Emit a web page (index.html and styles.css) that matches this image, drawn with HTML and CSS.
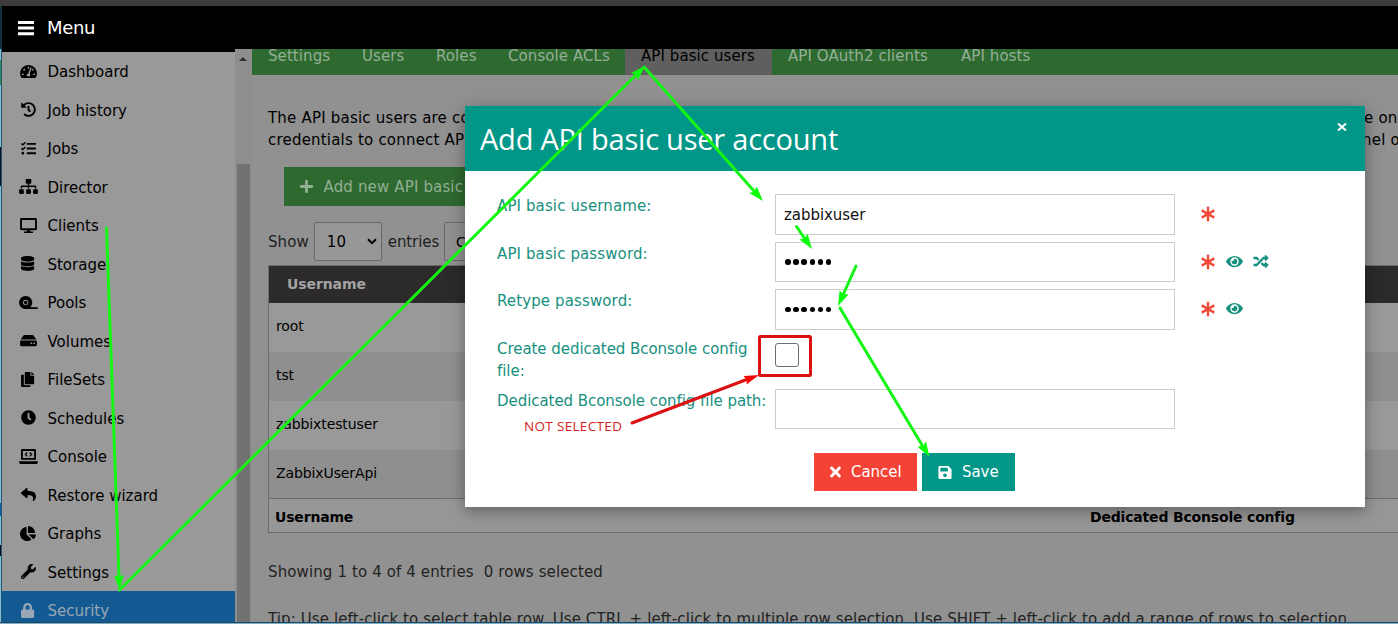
FILE: index.html
```
<!DOCTYPE html>
<html lang="en">
<head>
<meta charset="utf-8">
<title>API basic users</title>
<link rel="stylesheet" href="styles.css">
</head>
<body>
<div class="app">
  <div class="topstrip"></div>
  <header class="menubar">
    <svg class="bars" viewBox="0 0 16 16"><path d="M0 1h16v3H0zM0 6.6h16v3H0zM0 12.200h16v3H0z"/></svg>
    <span class="menu-label">Menu</span>
  </header>
  <div class="main">
    <div class="edge"></div>
    <nav class="sidebar">
      <a class="item"><svg class="ico w576" viewBox="0 0 576 512"><path d="M288 32C128.94 32 0 160.94 0 320c0 52.8 14.25 102.26 39.06 144.8 5.61 9.62 16.3 15.2 27.44 15.2h443c11.14 0 21.83-5.58 27.44-15.2C561.75 422.26 576 372.8 576 320c0-159.06-128.94-288-288-288zm0 64c14.71 0 26.58 10.13 30.32 23.65-1.11 2.26-2.64 4.23-3.45 6.67l-9.22 27.67c-5.13 3.49-10.97 6.01-17.64 6.01-17.67 0-32-14.33-32-32S270.33 96 288 96zM96 384c-17.67 0-32-14.33-32-32s14.33-32 32-32 32 14.33 32 32-14.33 32-32 32zm48-160c-17.67 0-32-14.33-32-32s14.33-32 32-32 32 14.33 32 32-14.33 32-32 32zm246.77-72.41l-61.33 184C343.13 347.33 352 364.54 352 384c0 11.72-3.38 22.55-8.88 32H232.88c-5.5-9.45-8.88-20.28-8.88-32 0-33.94 26.5-61.43 59.9-63.59l61.34-184.01c4.17-12.56 17.73-19.45 30.36-15.17 12.57 4.19 19.35 17.79 15.17 30.36zm14.66 57.2l15.52-46.55c3.47-1.29 7.13-2.23 11.05-2.23 17.67 0 32 14.33 32 32s-14.33 32-32 32c-11.38-.01-20.89-6.28-26.57-15.22zM480 384c-17.67 0-32-14.33-32-32s14.33-32 32-32 32 14.33 32 32-14.33 32-32 32z"/></svg><span>Dashboard</span></a>
      <a class="item"><svg class="ico" viewBox="0 0 512 512"><path d="M504 255.531c.253 136.64-111.18 248.372-247.82 248.468-59.015.042-113.223-20.53-155.822-54.911-11.077-8.94-11.905-25.541-1.839-35.607l11.267-11.267c8.609-8.609 22.353-9.551 31.891-1.984C173.062 425.135 212.781 440 256 440c101.705 0 184-82.311 184-184 0-101.705-82.311-184-184-184-48.814 0-93.149 18.969-126.068 49.932l50.754 50.754c10.08 10.08 2.941 27.314-11.313 27.314H24c-8.837 0-16-7.163-16-16V38.627c0-14.254 17.234-21.393 27.314-11.314l49.372 49.372C129.209 34.136 189.552 8 256 8c136.81 0 247.747 110.78 248 247.531zm-180.912 78.784l9.823-12.63c8.138-10.463 6.253-25.542-4.21-33.679L288 256.349V152c0-13.255-10.745-24-24-24h-16c-13.255 0-24 10.745-24 24v135.651l65.409 50.874c10.463 8.137 25.541 6.253 33.679-4.210z"/></svg><span>Job history</span></a>
      <a class="item"><svg class="ico" viewBox="0 0 512 512"><path d="M139.61 35.5a12 12 0 0 0-17 0L58.93 98.81l-22.7-22.12a12 12 0 0 0-17 0L3.53 92.41a12 12 0 0 0 0 17l47.59 47.4a12.78 12.78 0 0 0 17.61 0l15.59-15.62L156.52 69a12.09 12.09 0 0 0 .09-17zm0 159.19a12 12 0 0 0-17 0l-63.68 63.72-22.7-22.1a12 12 0 0 0-17 0L3.53 252a12 12 0 0 0 0 17L51 316.5a12.77 12.77 0 0 0 17.6 0l15.7-15.69 72.2-72.22a12 12 0 0 0 .09-16.9zM64 368c-26.49 0-48.59 21.5-48.59 48S37.53 464 64 464a48 48 0 0 0 0-96zm432 16H208a16 16 0 0 0-16 16v32a16 16 0 0 0 16 16h288a16 16 0 0 0 16-16v-32a16 16 0 0 0-16-16zm0-320H208a16 16 0 0 0-16 16v32a16 16 0 0 0 16 16h288a16 16 0 0 0 16-16V80a16 16 0 0 0-16-16zm0 160H208a16 16 0 0 0-16 16v32a16 16 0 0 0 16 16h288a16 16 0 0 0 16-16v-32a16 16 0 0 0-16-16z"/></svg><span>Jobs</span></a>
      <a class="item"><svg class="ico w640" viewBox="0 0 640 512"><path d="M128 352H32c-17.67 0-32 14.33-32 32v96c0 17.67 14.33 32 32 32h96c17.67 0 32-14.33 32-32v-96c0-17.67-14.33-32-32-32zm-24-80h192v48h48v-48h192v48h48v-57.59c0-21.17-17.23-38.41-38.41-38.41H344v-64h40c17.67 0 32-14.33 32-32V32c0-17.67-14.33-32-32-32H256c-17.67 0-32 14.33-32 32v96c0 17.67 14.33 32 32 32h40v64H94.41C73.23 224 56 241.23 56 262.41V320h48v-48zm264 80h-96c-17.67 0-32 14.33-32 32v96c0 17.67 14.33 32 32 32h96c17.67 0 32-14.33 32-32v-96c0-17.67-14.33-32-32-32zm240 0h-96c-17.67 0-32 14.33-32 32v96c0 17.67 14.33 32 32 32h96c17.67 0 32-14.33 32-32v-96c0-17.67-14.33-32-32-32z"/></svg><span>Director</span></a>
      <a class="item"><svg class="ico w576" viewBox="0 0 576 512"><path d="M528 0H48C21.5 0 0 21.5 0 48v320c0 26.5 21.5 48 48 48h192l-16 48h-72c-13.3 0-24 10.7-24 24s10.7 24 24 24h272c13.3 0 24-10.7 24-24s-10.7-24-24-24h-72l-16-48h192c26.5 0 48-21.5 48-48V48c0-26.5-21.5-48-48-48zm-16 352H64V64h448v288z"/></svg><span>Clients</span></a>
      <a class="item"><svg class="ico w448" viewBox="0 0 448 512"><path d="M448 73.143v45.714C448 159.143 347.667 192 224 192S0 159.143 0 118.857V73.143C0 32.857 100.333 0 224 0s224 32.857 224 73.143zM448 176v102.857C448 319.143 347.667 352 224 352S0 319.143 0 278.857V176c48.125 33.143 136.208 48.572 224 48.572S399.874 209.143 448 176zm0 160v102.857C448 479.143 347.667 512 224 512S0 479.143 0 438.857V336c48.125 33.143 136.208 48.572 224 48.572S399.874 369.143 448 336z"/></svg><span>Storage</span></a>
      <a class="item"><svg class="ico w640" viewBox="0 0 640 512"><path d="M224 192c-35.3 0-64 28.7-64 64s28.7 64 64 64 64-28.7 64-64-28.7-64-64-64zm400 224H380.6c41.5-40.7 67.4-97.3 67.4-160 0-123.700-100.300-224-224-224S0 132.3 0 256s100.3 224 224 224h400c8.8 0 16-7.2 16-16v-32c0-8.8-7.2-16-16-16zm-400-64c-53 0-96-43-96-96s43-96 96-96 96 43 96 96-43 96-96 96z"/></svg><span>Pools</span></a>
      <a class="item"><svg class="ico w576" viewBox="0 0 576 512"><path d="M576 304v96c0 26.51-21.49 48-48 48H48c-26.51 0-48-21.49-48-48v-96c0-26.51 21.49-48 48-48h480c26.51 0 48 21.49 48 48zm-48-80a79.557 79.557 0 0 1 30.777 6.165L462.25 85.374A48.003 48.003 0 0 0 422.311 64H153.689a48 48 0 0 0-39.938 21.374L17.223 230.165A79.557 79.557 0 0 1 48 224h480zm-48 96c-17.673 0-32 14.327-32 32s14.327 32 32 32 32-14.327 32-32-14.327-32-32-32zm-96 0c-17.673 0-32 14.327-32 32s14.327 32 32 32 32-14.327 32-32-14.327-32-32-32z"/></svg><span>Volumes</span></a>
      <a class="item"><svg class="ico w448" viewBox="0 0 448 512"><path d="M320 448v40c0 13.255-10.745 24-24 24H24c-13.255 0-24-10.745-24-24V120c0-13.255 10.745-24 24-24h72v296c0 30.879 25.121 56 56 56h168zm0-344V0H152c-13.255 0-24 10.745-24 24v368c0 13.255 10.745 24 24 24h272c13.255 0 24-10.745 24-24V128H344c-13.2 0-24-10.8-24-24zm120.971-31.029L375.029 7.029A24 24 0 0 0 358.059 0H352v96h96v-6.059a24 24 0 0 0-7.029-16.970z"/></svg><span>FileSets</span></a>
      <a class="item"><svg class="ico" viewBox="0 0 512 512"><path d="M256,8C119,8,8,119,8,256S119,504,256,504,504,393,504,256,393,8,256,8Zm92.490,313h0l-20,25a16,16,0,0,1-22.490,2.500h0l-67-49.720a40,40,0,0,1-15-31.230V112a16,16,0,0,1,16-16h32a16,16,0,0,1,16,16V256l58,42.500A16,16,0,0,1,348.490,321Z"/></svg><span>Schedules</span></a>
      <a class="item"><svg class="ico w640" viewBox="0 0 640 512"><path fill-rule="evenodd" d="M112 0h416c26 0 48 22 48 48v320H64V48C64 22 86 0 112 0zm16 64v240h384V64zM0 416h640v16c0 44-30 80-64 80H64c-36 0-64-36-64-80z"/><path class="line" d="M278 118l-66 68 66 68M362 118l66 68-66 68"/></svg><span>Console</span></a>
      <a class="item"><svg class="ico" viewBox="0 0 512 512"><path d="M8.309 189.836L184.313 37.851C199.719 24.546 224 35.347 224 56.015v80.053c160.629 1.839 288 34.032 288 186.258 0 61.441-39.581 122.309-83.333 154.132-13.653 9.931-33.111-2.533-28.077-18.631 45.344-145.012-21.507-183.510-176.590-185.742V360c0 20.700-24.300 31.453-39.687 18.164l-176.004-152c-11.071-9.562-11.086-26.753 0-36.328z"/></svg><span>Restore wizard</span></a>
      <a class="item"><svg class="ico w544" viewBox="0 0 544 512"><path d="M527.79 288H290.5l158.03 158.03c6.04 6.04 15.98 6.53 22.19.68 38.7-36.46 65.32-85.61 73.13-140.86 1.34-9.46-6.51-17.85-16.06-17.850zm-15.83-64.8C503.72 103.74 408.26 8.28 288.8.04 279.68-.59 272 7.1 272 16.24V240h223.77c9.14 0 16.82-7.68 16.19-16.8zM224 288V50.71c0-9.55-8.39-17.4-17.84-16.06C86.99 51.49-4.1 155.6.14 280.37 4.5 408.51 114.83 513.59 243.03 511.98c50.4-.63 96.97-16.87 135.26-44.03 7.9-5.6 8.42-17.23 1.57-24.08L224 288z"/></svg><span>Graphs</span></a>
      <a class="item"><svg class="ico" viewBox="0 0 512 512"><path d="M507.73 109.1c-2.24-9.03-13.54-12.09-20.12-5.51l-74.36 74.36-67.88-11.31-11.31-67.88 74.36-74.36c6.62-6.62 3.43-17.9-5.66-20.16-47.38-11.74-99.55.91-136.58 37.93-39.64 39.64-50.55 97.1-34.05 147.2L18.74 402.76c-24.99 24.99-24.99 65.51 0 90.5 24.99 24.99 65.51 24.99 90.5 0l213.21-213.21c50.12 16.71 107.47 5.68 147.37-34.22 37.07-37.07 49.7-89.32 37.91-136.73zM64 472c-13.25 0-24-10.75-24-24 0-13.26 10.75-24 24-24s24 10.74 24 24c0 13.25-10.75 24-24 24z"/></svg><span>Settings</span></a>
      <a class="item selected"><svg class="ico w448" viewBox="0 0 448 512"><path d="M400 224h-24v-72C376 68.2 307.8 0 224 0S72 68.2 72 152v72H48c-26.5 0-48 21.5-48 48v192c0 26.5 21.5 48 48 48h352c26.5 0 48-21.5 48-48V272c0-26.5-21.5-48-48-48zm-104 0H152v-72c0-39.7 32.3-72 72-72s72 32.3 72 72v72z"/></svg><span>Security</span></a>
    </nav>
    <div class="scroll"><svg class="uparrow" viewBox="0 0 8 4"><path d="M0 4L4 0l4 4z"/></svg><div class="thumb"></div></div>
    <section class="content">
      <div class="tabs">
        <a class="tab t1">Settings</a><a class="tab t2">Users</a><a class="tab t3">Roles</a><a class="tab t4">Console ACLs</a><a class="tab t5 active">API basic users</a><a class="tab t6">API OAuth2 clients</a><a class="tab t7">API hosts</a>
      </div>
      <div class="intro">
        <div class="split"><span>The API basic users are co</span><span>e on</span></div>
        <div class="split"><span>credentials to connect API</span><span class="nel">nel o</span></div>
      </div>
      <div class="addbtn"><svg viewBox="0 0 448 512"><path d="M416 208H272V64c0-17.67-14.33-32-32-32h-32c-17.67 0-32 14.33-32 32v144H32c-17.67 0-32 14.33-32 32v32c0 17.67 14.33 32 32 32h144v144c0 17.67 14.33 32 32 32h32c17.67 0 32-14.33 32-32V304h144c17.67 0 32-14.33 32-32v-32c0-17.67-14.33-32-32-32z"/></svg><span>Add new API basic</span></div>
      <div class="length"><span class="show">Show</span><div class="select"><span>10</span><svg viewBox="0 0 10 7"><path d="M1 1.200l4 4 4-4"/></svg></div><span class="entries">entries</span><div class="copy">C</div></div>
      <div class="table">
        <div class="thead">Username</div>
        <div class="row">root</div>
        <div class="row odd">tst</div>
        <div class="row">zabbixtestuser</div>
        <div class="row odd last">ZabbixUserApi</div>
        <div class="tfoot"><b>Username</b><b>Dedicated Bconsole config</b></div>
      </div>
      <div class="info"><span>Showing 1 to 4 of 4 entries</span><span>0 rows selected</span></div>
      <div class="tip">Tip: Use left-click to select table row. Use CTRL + left-click to multiple row selection. Use SHIFT + left-click to add a range of rows to selection.</div>
    </section>
  </div>
  <div class="bottom"></div>
</div>

<div class="modal">
  <div class="modal-head"><h2>Add API basic user account</h2><svg class="close" viewBox="0 0 10 8"><path d="M1 .5l8 7M9 .5l-8 7"/></svg></div>
  <div class="form">
    <label>API basic username:</label><div class="input">zabbixuser</div>
    <div class="marks"><svg class="ast" viewBox="0 0 16 16"><path d="M8 .8v14.400M1.700 4.400l12.600 7.200M14.300 4.400L1.700 11.600"/></svg></div>
    <label>API basic password:</label><div class="input dots"><i></i><i></i><i></i><i></i><i></i><i></i></div>
    <div class="marks"><svg class="ast" viewBox="0 0 16 16"><path d="M8 .8v14.400M1.700 4.400l12.600 7.200M14.300 4.400L1.700 11.600"/></svg><svg class="eye" viewBox="0 0 576 512"><path d="M572.52 241.4C518.29 135.59 410.93 64 288 64S57.68 135.64 3.48 241.41a32.35 32.35 0 0 0 0 29.19C57.71 376.41 165.07 448 288 448s230.32-71.64 284.52-177.41a32.35 32.35 0 0 0 0-29.19zM288 400a144 144 0 1 1 144-144 143.93 143.93 0 0 1-144 144zm0-240a95.31 95.31 0 0 0-25.31 3.79 47.85 47.85 0 0 1-66.9 66.9A95.78 95.78 0 1 0 288 160z"/></svg><svg class="shuffle" viewBox="0 0 512 512"><path d="M504.971 359.029c9.373 9.373 9.373 24.569 0 33.941l-80 79.984c-15.01 15.01-40.971 4.49-40.971-16.971V416h-58.785a12.004 12.004 0 0 1-8.773-3.812l-70.556-75.596 53.333-57.143L352 336h32v-39.981c0-21.438 25.943-31.998 40.971-16.971l80 79.981zM12 176h84l52.781 56.551 53.333-57.143-70.556-75.596A11.999 11.999 0 0 0 122.785 96H12c-6.627 0-12 5.373-12 12v56c0 6.627 5.373 12 12 12zm372 0v39.984c0 21.46 25.961 31.98 40.971 16.971l80-79.984c9.373-9.373 9.373-24.569 0-33.941l-80-79.981C409.943 24.021 384 34.582 384 56.019V96h-58.785a12.004 12.004 0 0 0-8.773 3.812L96 336H12c-6.627 0-12 5.373-12 12v56c0 6.627 5.373 12 12 12h110.785c3.326 0 6.503-1.381 8.773-3.812L352 176h32z"/></svg></div>
    <label>Retype password:</label><div class="input dots"><i></i><i></i><i></i><i></i><i></i><i></i></div>
    <div class="marks"><svg class="ast" viewBox="0 0 16 16"><path d="M8 .8v14.400M1.700 4.400l12.600 7.200M14.300 4.400L1.700 11.600"/></svg><svg class="eye" viewBox="0 0 576 512"><path d="M572.52 241.4C518.29 135.59 410.93 64 288 64S57.68 135.64 3.48 241.41a32.35 32.35 0 0 0 0 29.19C57.71 376.41 165.07 448 288 448s230.32-71.64 284.52-177.41a32.35 32.35 0 0 0 0-29.19zM288 400a144 144 0 1 1 144-144 143.93 143.93 0 0 1-144 144zm0-240a95.31 95.31 0 0 0-25.31 3.79 47.85 47.85 0 0 1-66.9 66.9A95.78 95.78 0 1 0 288 160z"/></svg></div>
    <label class="tight">Create dedicated Bconsole config<br>file:</label><div class="check"></div><div class="marks"></div>
    <label class="tight">Dedicated Bconsole config file path:</label><div class="input"></div><div class="marks"></div>
  </div>
  <div class="actions">
    <div class="btn cancel"><svg viewBox="0 0 352 512"><path d="M242.72 256l100.07-100.07c12.28-12.28 12.28-32.19 0-44.48l-22.24-22.24c-12.28-12.28-32.19-12.28-44.48 0L176 189.28 75.93 89.21c-12.28-12.28-32.19-12.28-44.48 0L9.21 111.45c-12.28 12.28-12.28 32.19 0 44.48L109.28 256 9.21 356.07c-12.28 12.28-12.28 32.19 0 44.48l22.24 22.24c12.28 12.28 32.2 12.28 44.48 0L176 322.72l100.07 100.07c12.28 12.28 32.2 12.28 44.48 0l22.24-22.24c12.28-12.28 12.28-32.19 0-44.480L242.72 256z"/></svg><span>Cancel</span></div>
    <div class="btn save"><svg viewBox="0 0 448 512"><path d="M433.941 129.941l-83.882-83.882A48 48 0 0 0 316.118 32H48C21.49 32 0 53.49 0 80v352c0 26.51 21.49 48 48 48h352c26.51 0 48-21.49 48-48V163.882a48 48 0 0 0-14.059-33.941zM224 416c-35.346 0-64-28.654-64-64 0-35.346 28.654-64 64-64s64 28.654 64 64c0 35.346-28.654 64-64 64zm96-304.520V212c0 6.627-5.373 12-12 12H76c-6.627 0-12-5.373-12-12V108c0-6.627 5.373-12 12-12h228.520c3.183 0 6.235 1.264 8.485 3.515l3.480 3.480A11.996 11.996 0 0 1 320 111.480z"/></svg><span>Save</span></div>
  </div>
</div>

<div class="note">NOT SELECTED</div>
<svg class="annot" viewBox="0 0 1398 624">
  <defs>
    <marker id="hg" markerUnits="userSpaceOnUse" markerWidth="18" markerHeight="12" refX="15" refY="5" orient="auto"><path d="M0 0L15 5 0 10 2 5z" fill="#0bff0b"/></marker>
    <marker id="hr" markerUnits="userSpaceOnUse" markerWidth="18" markerHeight="12" refX="15" refY="4.500" orient="auto"><path d="M0 0L15 4.500 0 9 2 4.500z" fill="#f80404"/></marker>
  </defs>
  <g class="green">
    <path class="stem" d="M106.500 228L119 576"/><path class="stem" d="M119.500 590L635 76"/><path class="stem" d="M644 67L754 191"/>
    <path class="stem" d="M796.500 226.500L804 237.500"/><path class="stem" d="M856 266L843 295"/><path class="stem" d="M840 308L922 445"/>
    <path class="tipline" d="M106.500 228L119.500 590" marker-end="url(#hg)"/>
    <path class="tipline" d="M119.500 590L645 66" marker-end="url(#hg)"/>
    <path class="tipline" d="M644 67L763 201" marker-end="url(#hg)"/>
    <path class="tipline" d="M796.500 226.500L812 249" marker-end="url(#hg)"/>
    <path class="tipline" d="M856 266L838 306" marker-end="url(#hg)"/>
    <path class="tipline" d="M840 308L929.500 457" marker-end="url(#hg)"/>
  </g>
  <g class="red">
    <rect x="759.500" y="336.500" width="51" height="39" rx="1"/>
    <path class="stem" d="M632 423L748 379"/>
    <path class="tipline" d="M632 423L759 375" marker-end="url(#hr)"/>
  </g>
</svg>
</body>
</html>
```
FILE: styles.css
```
* { box-sizing: border-box; }
body {
  margin: 0;
  width: 1398px;
  height: 624px;
  overflow: hidden;
  position: relative;
  font: 15px/22.5px "DejaVu Sans", sans-serif;
  letter-spacing: 0.08px;
  color: #000;
  white-space: nowrap;
}
svg { display: block; fill: currentColor; flex: none; }
.app { display: flex; flex-direction: column; height: 624px; }
.topstrip { height: 6px; background: #3b3b3b; }
.menubar {
  height: 43px;
  flex: none;
  background: #000;
  color: #fff;
  border-left: 2px solid #10303f;
  padding-left: 16px;
  display: flex;
  align-items: center;
  font-size: 18px;
  letter-spacing: -0.300px;
}
.bars { width: 16px; height: 16px; }
.menu-label { margin-left: 13px; padding-top: 1px; }
.main { display: flex; height: 573px; }
.edge {
  width: 2px;
  border-right: 1px solid #24566e;
  background: linear-gradient(#83bcd6 11px, #2f8a57 11px, #2f8a57 36px, #83bcd6 36px, #83bcd6 98px, #04101f 98px, #04101f 137px, #83bcd6 137px, #83bcd6 454px, #0a63a0 454px, #0a63a0 467px, #83bcd6 467px, #83bcd6 496px, #04101f 496px, #04101f 507px, #83bcd6 507px);
}
.sidebar { width: 233px; background: #999; border-top: 3px solid #000; overflow: hidden; flex: none; letter-spacing: 0; }
.item { display: flex; align-items: center; height: 38.5px; padding-left: 16px; }
.item span { margin-left: 9.500px; padding-top: 2px; }
.ico { width: 15px; height: 15px; margin: 0 2.500px; }
.ico.w576 { width: 17px; margin: 0 1.500px; }
.ico.w640 { width: 19px; margin: 0 .5px; }
.ico.w448 { width: 13.200px; margin: 0 3.400px; }
.ico.w544 { width: 16px; margin: 0 2px; }
.line { fill: none; stroke: currentColor; stroke-width: 42; }
.selected { background: #145a92; color: #98a8b6; }
.scroll { width: 17px; background: #8e8e8e; padding: 8px 2px 0; flex: none; }
.uparrow { width: 8px; height: 4px; margin-left: 2px; color: #303030; }
.thumb { margin-top: 103px; height: 470px; width: 13px; background: #727272; }
.content { flex: 1; background: #919191; overflow: hidden; display: flex; flex-direction: column; }
.tabs { height: 26px; background: #2e6930; color: #93b094; display: flex; flex: none; overflow: hidden; }
.tab { padding: 0 16px; height: 26px; line-height: 14px; flex: none; }
.t1 { width: 94px; } .t2 { width: 74px; } .t3 { width: 72px; } .t4 { width: 133px; }
.t5 { width: 147px; } .t6 { width: 173px; }
.active { background: #5f5f5f; color: #000; }
.intro { padding: 32px 0 0 16px; line-height: 22px; letter-spacing: 0.200px; }
.split { display: flex; }
.split span:first-child { width: 1096px; flex: none; }
.nel { margin-left: -2px; }
.addbtn {
  margin: 16px 0 0 32px;
  width: 400px;
  height: 39px;
  background: #2e6930;
  color: #93b094;
  display: flex;
  align-items: center;
  padding-left: 16px;
  flex: none;
  letter-spacing: 0.150px;
}
.addbtn svg { width: 13px; height: 15px; }
.addbtn span { margin-left: 10.500px; padding-top: 1px; }
.length { margin: 16px 0 0 16px; display: flex; align-items: center; height: 39px; color: #1e1e1e; flex: none; }
.show, .entries, .select span { padding-top: 1px; }
.select {
  margin-left: 5px;
  width: 68px;
  height: 39px;
  border: 1px solid #696969;
  border-radius: 2px;
  background: #979797;
  color: #000;
  display: flex;
  align-items: center;
  padding-left: 12px;
}
.select svg { width: 10px; height: 7px; margin-left: 21px; fill: none; stroke: #000; stroke-width: 2; }
.entries { margin-left: 6px; letter-spacing: -0.100px; }
.copy { margin-left: 5px; width: 60px; height: 39px; border: 1px solid #6a6a6a; border-radius: 2px; padding: 8px 11px; color: #000; font-size: 14px; }
.table { margin: 4px 0 0 16px; width: 1200px; border: 1px solid #6c6c6c; flex: none; font-size: 14px; letter-spacing: -0.100px; }
.thead { height: 37px; background: #2c2a2b; color: #a3a3a3; font-weight: bold; padding: 7px 18px; }
.row { height: 49px; background: #999; padding: 12px 7px; }
.row.odd { background: #8f8f8f; }
.row.last { height: 48px; }
.tfoot { border-top: 1px solid #6c6c6c; height: 34px; background: #979797; display: grid; grid-template-columns: 815px 1fr; padding: 7px 6px 0; letter-spacing: -0.180px; }
.info { margin: 28px 0 0 16px; display: flex; gap: 10px; color: #222; letter-spacing: 0.120px; }
.tip { margin: 24px 0 0 16px; color: #222; letter-spacing: 0.105px; }
.bottom { height: 2px; border-top: 1px solid #1c4a63; background: #7faec6; }

.modal {
  position: absolute;
  left: 465px;
  top: 106px;
  width: 900px;
  height: 401px;
  background: #fff;
  box-shadow: 0 4px 10px rgba(0,0,0,.2), 0 4px 20px rgba(0,0,0,.19);
}
.modal-head { height: 65px; background: #009688; color: #fff; display: flex; justify-content: space-between; padding: 0 18px 0 15px; }
h2 { margin: 0; font: 400 29px/66px "Open Sans", "Noto Sans", sans-serif; letter-spacing: -0.220px; }
.close { width: 10px; height: 8px; margin-top: 17px; fill: none; stroke: #fff; stroke-width: 2; }
.form {
  display: grid;
  grid-template-columns: 278px 400px auto;
  grid-template-rows: 41px 40px 41px 45px 40px;
  row-gap: 7px;
  padding: 23px 0 0 32px;
  color: #179080;
}
.input { border: 1px solid #ccc; color: #111; padding: 9px 8px; letter-spacing: -0.050px; }
.form label { padding-top: 1px; line-height: 22px; letter-spacing: 0.120px; }
.form label.tight { letter-spacing: -0.050px; }
.marks { display: flex; align-items: center; padding-left: 25px; height: 39px; }
.ast { width: 16px; height: 16px; fill: none; stroke: #ef4a3a; stroke-width: 2.400; }
.eye { width: 17px; height: 15px; margin-left: 10px; }
.shuffle { width: 16px; height: 15px; margin-left: 10px; }
.dots { display: flex; align-items: center; gap: 2.700px; padding: 0 9px; }
.dots i { width: 5.500px; height: 5.500px; border-radius: 50%; background: #000; }
.check { width: 24px; height: 24px; border: 1px solid #6f6f6f; border-radius: 3px; margin-top: 6px; }
.actions { display: flex; gap: 5px; padding: 24px 0 0 349px; }
.btn { height: 38px; color: #fff; display: flex; align-items: center; padding-left: 16px; }
.cancel { width: 103px; background: #f44336; }
.cancel svg { width: 11px; height: 16px; }
.save { width: 93px; background: #009688; }
.save svg { width: 14px; height: 15px; }
.btn span { margin-left: 10px; padding-top: 1px; letter-spacing: -0.050px; }
.note { position: absolute; left: 524px; top: 415px; font: 13.500px/22px "Open Sans", sans-serif; letter-spacing: 0.330px; color: #d42020; }
.annot { position: absolute; left: 0; top: 0; width: 1398px; height: 624px; }
.green { fill: none; stroke: #14f514; stroke-width: 3; }
.red { fill: none; stroke: #dc1010; stroke-width: 3; }
.stem { stroke-linecap: round; }
.tipline { stroke: none; }
```
